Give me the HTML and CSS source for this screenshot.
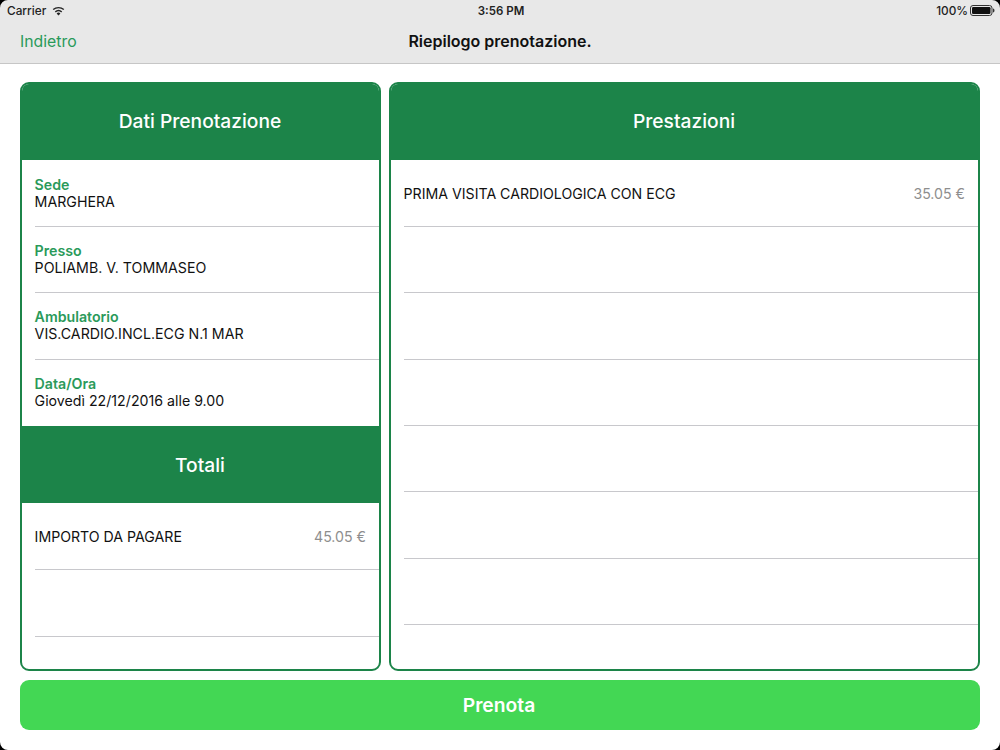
FILE: index.html
```html
<!DOCTYPE html>
<html lang="it">
<head>
<meta charset="utf-8">
<title>Riepilogo prenotazione</title>
<link rel="stylesheet" href="styles.css">
</head>
<body>
<div class="screen">
  <header class="bar">
    <div class="status">
      <div class="status-left">
        <span>Carrier</span>
        <svg class="wifi" width="13" height="10" viewBox="0 0 13 10"><path d="M6.5 9.6 4.6 7.4a2.9 2.9 0 0 1 3.8 0Z" fill="#222"/><path d="M3.3 5.9a4.9 4.9 0 0 1 6.4 0M1.2 3.6a8 8 0 0 1 10.6 0" fill="none" stroke="#222" stroke-width="1.4"/></svg>
      </div>
      <div class="status-time">3:56 PM</div>
      <div class="status-right">
        <span>100%</span>
        <svg width="25" height="11" viewBox="0 0 25 11"><rect x=".5" y=".5" width="21.5" height="10" rx="2.5" fill="none" stroke="#333"/><rect x="2" y="2" width="18.5" height="7" rx="1.2" fill="#111"/><path d="M23 3.6c1 .2 1.5 1 1.5 1.9s-.5 1.7-1.5 1.9Z" fill="#333"/></svg>
      </div>
    </div>
    <nav class="nav">
      <a class="back">Indietro</a>
      <h1 class="nav-title">Riepilogo prenotazione.</h1>
    </nav>
  </header>

  <main class="content">
    <div class="panels">
      <section class="panel panel-left">
        <h2 class="panel-head">Dati Prenotazione</h2>
        <div class="row row-detail"><div class="label">Sede</div><div class="value">MARGHERA</div></div>
        <div class="row row-detail"><div class="label">Presso</div><div class="value">POLIAMB. V. TOMMASEO</div></div>
        <div class="row row-detail"><div class="label">Ambulatorio</div><div class="value">VIS.CARDIO.INCL.ECG N.1 MAR</div></div>
        <div class="row row-detail row-last"><div class="label">Data/Ora</div><div class="value">Giovedì 22/12/2016 alle 9.00</div></div>
        <h2 class="panel-head panel-head-mid">Totali</h2>
        <div class="row row-item"><span class="value">IMPORTO DA PAGARE</span><span class="price">45.05 €</span></div>
        <div class="row"></div>
      </section>
      <section class="panel panel-right">
        <h2 class="panel-head">Prestazioni</h2>
        <div class="row row-item"><span class="value">PRIMA VISITA CARDIOLOGICA CON ECG</span><span class="price">35.05 €</span></div>
        <div class="row"></div>
        <div class="row"></div>
        <div class="row"></div>
        <div class="row"></div>
        <div class="row"></div>
        <div class="row"></div>
      </section>
    </div>
    <button class="book" type="button">Prenota</button>
  </main>
</div>
</body>
</html>
```
FILE: styles.css
```css
* { box-sizing: border-box; }
html, body { margin: 0; padding: 0; }
body { font-family: Inter, "Liberation Sans", sans-serif; color: #111; background: #fff; }
.screen { position: relative; width: 1000px; height: 750px; display: flex; flex-direction: column; overflow: hidden; }
.screen::after { content: ""; position: absolute; inset: -6px; border: 6px solid #000; border-radius: 14px; pointer-events: none; }

.bar { height: 64px; flex: none; background: #e8e8e8; border-bottom: 1px solid #c6c6c6; }
.status { height: 21px; padding: 0 5px 0 7px; display: grid; grid-template-columns: 1fr auto 1fr; align-items: center; font-size: 11.8px; font-weight: 500; color: #222; }
.status-left { display: flex; align-items: center; gap: 6px; }
.status-time { font-weight: 600; font-size: 11.5px; }
.status-right { display: flex; align-items: center; justify-content: flex-end; gap: 2px; }
.nav { height: 42px; position: relative; display: flex; align-items: center; justify-content: center; padding-bottom: 2px; }
.back { position: absolute; left: 20px; top: 10px; font-size: 15.8px; line-height: 22px; color: #2a9a5a; }
.nav-title { margin: 0; font-size: 16px; font-weight: 600; color: #111; }

.content { flex: 1; padding: 18px 20px 20px; display: flex; flex-direction: column; gap: 9px; }
.panels { height: 589px; display: flex; gap: 8px; }
.panel { border: 2px solid #1c8449; border-radius: 9px; overflow: hidden; background: #fff; }
.panel-left { width: 361px; flex: none; }
.panel-right { flex: 1; }
.panel-head { margin: 0 0 .6px; height: 76px; padding: 0 1px 3px 0; background: #1c8449; color: #fff; font-size: 19.2px; font-weight: 500; display: flex; align-items: center; justify-content: center; }
.panel-head-mid { height: 77.4px; padding-bottom: 0; }
.row { height: 66.33px; margin-left: 12.6px; border-bottom: 1px solid #c8c8cc; }
.row-last { border-bottom: 0; }
.row-detail { padding-top: 15px; font-size: 14.2px; line-height: 17px; }
.row-item { display: flex; align-items: center; justify-content: space-between; padding-right: 13px; font-size: 14.15px; }
.label { color: #2a9a5a; font-weight: 600; }
.value { color: #111; }
.price { color: #8e8e8e; }
.book { height: 50px; flex: none; border: 0; padding: 0 2px 0 0; border-radius: 9px; background: #43d754; color: #fff; font-family: inherit; font-size: 19.3px; font-weight: 600; }
```
